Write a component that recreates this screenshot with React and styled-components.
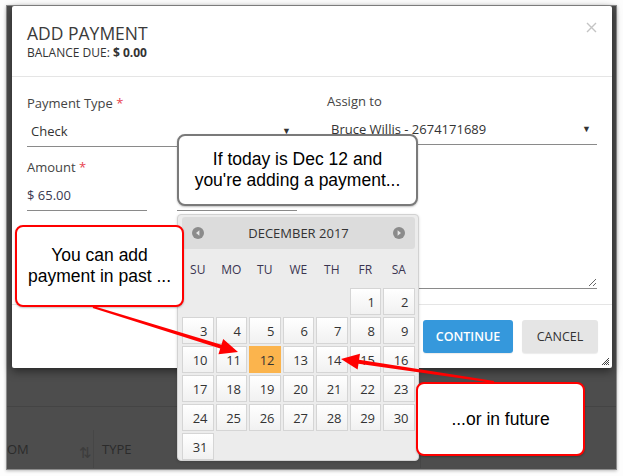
import styled, { createGlobalStyle } from 'styled-components';

const GlobalStyle = createGlobalStyle`
    body {
        margin: 0;
        background: #fff;
        font-family: "Open Sans", "Liberation Sans", sans-serif;
    }
    * { box-sizing: border-box; }
`;

// red arrow shape, tapering from tail to head
const arrowPoints = (tx, ty, px, py) => {
    const len = Math.hypot(px - tx, py - ty);
    const dx = (px - tx) / len, dy = (py - ty) / len;
    const nx = -dy, ny = dx;
    const bx = px - dx * 18, by = py - dy * 18;
    const pts = [
        [tx + nx * 1, ty + ny * 1],
        [bx + nx * 2, by + ny * 2],
        [bx + nx * 8, by + ny * 8],
        [px, py],
        [bx - nx * 8, by - ny * 8],
        [bx - nx * 2, by - ny * 2],
        [tx - nx * 1, ty - ny * 1],
    ];
    return pts.map(p => p.join(',')).join(' ');
};

const weekDays = ['SU', 'MO', 'TU', 'WE', 'TH', 'FR', 'SA'];
const days = [
    ...Array(5).fill(null),
    ...Array.from({ length: 31 }, (_, i) => i + 1),
];

const App = () => {
    return (
        <Page>
            <GlobalStyle />
            <Frame>
                <BgTop />
                <BgGap />
                <BgHead>
                    <BgCol $w={87}>
                        <span>OM</span>
                        <SortIcon>⇅</SortIcon>
                    </BgCol>
                    <BgCol $w={327} $pad={8}>TYPE</BgCol>
                </BgHead>

                <Modal>
                    <Header>
                        <Title>ADD PAYMENT</Title>
                        <SubTitle>BALANCE DUE: <b>$ 0.00</b></SubTitle>
                        <CloseBtn>
                            <svg width="11" height="11" viewBox="0 0 11 11">
                                <path d="M1 1 L10 10 M10 1 L1 10" stroke="#c4c4c4" strokeWidth="1.4" />
                            </svg>
                        </CloseBtn>
                    </Header>
                    <Body>
                        <Column>
                            <Field>
                                <Label>Payment Type <Req>*</Req></Label>
                                <Select>
                                    <span>Check</span>
                                    <Caret>▼</Caret>
                                </Select>
                            </Field>
                            <Row>
                                <Field>
                                    <Label>Amount <Req>*</Req></Label>
                                    <Input>$ 65.00</Input>
                                </Field>
                                {/* date field, covered by the picker and the note */}
                                <Field>
                                    <Label />
                                    <Input />
                                </Field>
                            </Row>
                        </Column>
                        <Column $shift={-2}>
                            <Field>
                                <Label>Assign to</Label>
                                <Select>
                                    <span>Bruce Willis - 2674171689</span>
                                    <Caret>▼</Caret>
                                </Select>
                            </Field>
                            <Field>
                                <Label />
                                <TextArea>
                                    <Grip width="10" height="10" viewBox="0 0 10 10">
                                        <path d="M9 2 L2 9 M9 6 L6 9" stroke="#666" strokeWidth="1" />
                                    </Grip>
                                </TextArea>
                            </Field>
                        </Column>
                    </Body>
                    <Footer>
                        <Button $primary $w={90}>CONTINUE</Button>
                        <Button $w={76}>CANCEL</Button>
                        <CornerGrip width="9" height="9" viewBox="0 0 9 9">
                            <path d="M8 1 L1 8 M8 3 L3 8 M8 5 L5 8 M8 7 L7 8" stroke="#444" strokeWidth="1" />
                        </CornerGrip>
                    </Footer>

                    <Calendar>
                        <CalHeader>
                            <NavBtn>
                                <svg width="12" height="12" viewBox="0 0 12 12">
                                    <circle cx="6" cy="6" r="6" fill="#8b8b8b" />
                                    <path d="M7.4 3.2 L4 6 L7.4 8.8 Z" fill="#e6e6e6" />
                                </svg>
                            </NavBtn>
                            <MonthName>DECEMBER 2017</MonthName>
                            <NavBtn>
                                <svg width="12" height="12" viewBox="0 0 12 12">
                                    <circle cx="6" cy="6" r="6" fill="#8b8b8b" />
                                    <path d="M4.6 3.2 L8 6 L4.6 8.8 Z" fill="#e6e6e6" />
                                </svg>
                            </NavBtn>
                        </CalHeader>
                        <WeekRow>
                            {weekDays.map(d => <WeekDay key={d}>{d}</WeekDay>)}
                        </WeekRow>
                        <DayGrid>
                            {days.map((d, i) =>
                                d === null
                                    ? <Empty key={'e' + i} />
                                    : <Day key={d} $active={d === 12}>{d}</Day>
                            )}
                        </DayGrid>
                    </Calendar>
                </Modal>
            </Frame>

            <Callout $x={177} $y={134} $w={241} $h={72}>
                If today is Dec 12 and<br />you're adding a payment...
            </Callout>
            <Callout $x={15} $y={225} $w={169} $h={82} $red>
                You can add<br />payment in past ...
            </Callout>
            <Callout $x={416} $y={382} $w={169} $h={74} $red>
                ...or in future
            </Callout>

            <Arrows width="623" height="476" viewBox="0 0 623 476">
                <polygon points={arrowPoints(93, 307, 238, 352)} fill="#f00" />
                <polygon points={arrowPoints(494, 382, 341, 359)} fill="#f00" />
            </Arrows>
        </Page>
    );
};
export default App;

const Page = styled.div`
    position: relative;
    width: 623px;
    height: 476px;
    overflow: hidden;
    background: #fdfdfd;
`;

const Frame = styled.div`
    position: relative;
    margin: 5px 0 0 6px;
    width: 611px;
    height: 465px;
    border: 1px solid #8c8c8c;
    background: #4d4d4d;
    display: flex;
    flex-direction: column;
    box-shadow: 0 1px 3px rgba(0, 0, 0, 0.25);
`;

// dimmed page behind the modal
const BgTop = styled.div`
    height: 401px;
    border-bottom: 1px solid #444;
`;
const BgGap = styled.div`
    height: 23px;
`;
const BgHead = styled.div`
    display: flex;
    height: 38px;
    font-size: 13px;
    color: #2b2b2b;
`;
const BgCol = styled.div`
    width: ${props => props.$w}px;
    display: flex;
    align-items: center;
    justify-content: space-between;
    padding: 0 1px 0 ${props => props.$pad || 0}px;
    border-right: 1px solid #464646;
`;
const SortIcon = styled.span`
    font-size: 15px;
    color: #3c3c3c;
    margin-top: 6px;
`;

const Modal = styled.div`
    position: absolute;
    left: 5px;
    top: 0;
    width: 600px;
    height: 362px;
    background: #fff;
    border-radius: 2px;
    box-shadow: 0 3px 10px rgba(0, 0, 0, 0.5);
    display: flex;
    flex-direction: column;
    color: #333;
`;

const Header = styled.div`
    position: relative;
    height: 71px;
    padding: 16px 15px 0;
    border-bottom: 1px solid #e5e5e5;
`;
const Title = styled.div`
    font-size: 17.5px;
    line-height: 22px;
    color: #3a3a3a;
    font-weight: 400;
`;
const SubTitle = styled.div`
    font-size: 12px;
    line-height: 17px;
    color: #333;

    b {
        font-weight: 700;
    }
`;
const CloseBtn = styled.div`
    position: absolute;
    right: 15px;
    top: 16px;
    display: flex;
`;

const Body = styled.div`
    height: 227px;
    padding: 17px 15px 0;
    display: grid;
    grid-template-columns: 270px 270px;
    column-gap: 30px;
`;
const Column = styled.div`
    display: flex;
    flex-direction: column;
    gap: 11px;
    margin-top: ${props => props.$shift || 0}px;
`;
const Row = styled.div`
    display: grid;
    grid-template-columns: 120px 120px;
    column-gap: 30px;
`;
const Field = styled.div`
    display: flex;
    flex-direction: column;
`;
const Label = styled.div`
    height: 18px;
    font-size: 13px;
    line-height: 18px;
    color: #444;
`;
const Req = styled.span`
    color: #e8434f;
`;
const Select = styled.div`
    margin-top: 3px;
    height: 32px;
    padding: 0 6px 0 4px;
    display: flex;
    align-items: center;
    justify-content: space-between;
    border-bottom: 1px solid #8a8a8a;
    font-size: 13px;
    color: #333;
`;
const Caret = styled.span`
    font-size: 9px;
    color: #333;
`;
const Input = styled.div`
    margin-top: 3px;
    height: 32px;
    display: flex;
    align-items: center;
    border-bottom: 1px solid #8a8a8a;
    font-size: 13px;
    color: #3a3850;
`;
const TextArea = styled.div`
    position: relative;
    margin-top: 3px;
    height: 112px;
    border-bottom: 1px solid #8a8a8a;
`;
const Grip = styled.svg`
    position: absolute;
    right: 0;
    bottom: 1px;
`;

const Footer = styled.div`
    position: relative;
    height: 64px;
    border-top: 1px solid #e5e5e5;
    padding: 15px 14px 0 0;
    display: flex;
    justify-content: flex-end;
    gap: 9px;
`;
const Button = styled.div`
    width: ${props => props.$w}px;
    height: 33px;
    display: flex;
    align-items: center;
    justify-content: center;
    border-radius: 3px;
    font-size: 12.5px;
    font-weight: ${props => props.$primary ? 600 : 400};
    background: ${props => props.$primary ? '#3598dc' : '#e5e5e5'};
    color: ${props => props.$primary ? '#fff' : '#333'};
    box-shadow: 0 1px 1px rgba(0, 0, 0, 0.08);
`;
const CornerGrip = styled.svg`
    position: absolute;
    right: 2px;
    bottom: 2px;
`;

const Calendar = styled.div`
    position: absolute;
    left: 165px;
    top: 208px;
    width: 242px;
    height: 247px;
    padding: 2px 3px 0 4px;
    background: #ececec;
    border: 1px solid #d2d2d2;
    border-radius: 4px;
    box-shadow: 0 1px 3px rgba(0, 0, 0, 0.15);
`;
const CalHeader = styled.div`
    height: 32px;
    padding: 0 10px 0 10px;
    display: flex;
    align-items: center;
    justify-content: space-between;
    background: #dcdcdc;
    border-radius: 3px;
`;
const NavBtn = styled.div`
    display: flex;
`;
const MonthName = styled.div`
    font-size: 13px;
    color: #333;
`;
const WeekRow = styled.div`
    height: 39px;
    display: grid;
    grid-template-columns: repeat(7, 31.5px);
    column-gap: 2px;
    align-items: center;
`;
const WeekDay = styled.div`
    text-align: center;
    font-size: 12px;
    color: #3a3450;
    padding-top: 1px;
`;
const DayGrid = styled.div`
    display: grid;
    grid-template-columns: repeat(7, 31.5px);
    grid-auto-rows: 27px;
    gap: 2px;
`;
const Empty = styled.div``;
const Day = styled.div`
    display: flex;
    align-items: center;
    justify-content: flex-end;
    padding-right: 5px;
    font-size: 13px;
    color: #333;
    border: 1px solid ${props => props.$active ? '#fbb44d' : '#d5d5d5'};
    background: ${props => props.$active ? '#fbb44d' : 'linear-gradient(#fff, #f1f1f1)'};
`;

// annotations drawn over the screenshot
const Callout = styled.div`
    position: absolute;
    left: ${props => props.$x}px;
    top: ${props => props.$y}px;
    width: ${props => props.$w}px;
    height: ${props => props.$h}px;
    display: flex;
    align-items: center;
    justify-content: center;
    text-align: center;
    background: #fff;
    border: 2px solid ${props => props.$red ? '#ff0000' : '#7a7a7a'};
    border-radius: 8px;
    box-shadow: 0 1px 2px rgba(0, 0, 0, 0.25);
    font-family: "Liberation Sans", Arial, sans-serif;
    font-size: 17.5px;
    line-height: 21px;
    color: #000;
`;
const Arrows = styled.svg`
    position: absolute;
    left: 0;
    top: 0;
    pointer-events: none;
`;
